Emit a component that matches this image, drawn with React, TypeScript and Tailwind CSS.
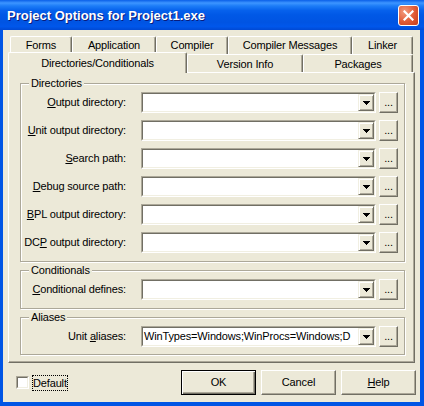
import React from 'react';
import clsx from 'clsx';

// Project Options dialog - XP caption with classic 3D controls inside
function Tab({ children, className, selected }: { children: React.ReactNode; className: string; selected?: boolean }) {
  return (
    <div
      className={clsx(
        'flex shrink-0 items-center justify-center whitespace-nowrap rounded-t-[2px] border-t border-l border-r border-t-white border-l-white border-r-[#716F64] bg-[#ECE9D8] shadow-[inset_-1px_0_0_#ACA899]',
        selected ? 'relative z-10 -mb-[1px] h-[21px]' : 'h-[18px]',
        className,
      )}
    >
      {children}
    </div>
  );
}

function DropButton() {
  return (
    <div className="flex h-full w-[16px] shrink-0 items-center justify-center border border-t-[#F1EFE2] border-l-[#F1EFE2] border-r-[#716F64] border-b-[#716F64] bg-[#ECE9D8] shadow-[inset_1px_1px_0_#fff,inset_-1px_-1px_0_#ACA899]">
      <svg width="7" height="4" viewBox="0 0 7 4" shapeRendering="crispEdges">
        <path d="M0 0h7v1h-1v1h-1v1h-1v1h-1v-1h-1v-1h-1v-1h-1z" fill="#000" />
      </svg>
    </div>
  );
}

function Combo({ value }: { value?: string }) {
  return (
    <div className="flex h-[21px] w-[235px] shrink-0 border border-t-[#ACA899] border-l-[#ACA899] border-r-white border-b-white">
      <div className="flex min-w-0 flex-1 border border-t-[#716F64] border-l-[#716F64] border-r-[#F1EFE2] border-b-[#F1EFE2] bg-white">
        <div className="flex min-w-0 flex-1 items-center overflow-hidden whitespace-nowrap pl-[1px]">{value}</div>
        <DropButton />
      </div>
    </div>
  );
}

function DotsButton() {
  return (
    <div className="ml-[3px] flex h-[21px] w-[19px] shrink-0 items-center justify-center border border-t-white border-l-white border-r-[#716F64] border-b-[#716F64] bg-[#ECE9D8] shadow-[inset_-1px_-1px_0_#ACA899]">
      ...
    </div>
  );
}

function Row({ label, value }: { label: React.ReactNode; value?: string }) {
  return (
    <div className="flex h-[21px] items-center">
      <div className="w-[105px] shrink-0 whitespace-nowrap text-right">{label}</div>
      <div className="ml-[15px]">
        <Combo value={value} />
      </div>
      <DotsButton />
    </div>
  );
}

function GroupBox({ title, children, className }: { title: string; children: React.ReactNode; className?: string }) {
  return (
    <fieldset className={clsx('ml-[11px] w-[385px] border border-[#ACA899] shadow-[inset_1px_1px_0_#fff,1px_1px_0_#fff]', className)}>
      <legend className="ml-[8px] bg-[#ECE9D8] px-[2px] leading-[13px]">{title}</legend>
      {children}
    </fieldset>
  );
}

function PushButton({ children, isDefault }: { children: React.ReactNode; isDefault?: boolean }) {
  return (
    <button
      type="button"
      className={clsx(
        'flex h-[25px] w-[75px] items-center justify-center bg-[#ECE9D8]',
        isDefault
          ? 'border border-black shadow-[inset_1px_1px_0_#fff,inset_-1px_-1px_0_#716F64,inset_-2px_-2px_0_#ACA899]'
          : 'border border-t-white border-l-white border-r-[#716F64] border-b-[#716F64] shadow-[inset_-1px_-1px_0_#ACA899]',
      )}
    >
      {children}
    </button>
  );
}

const U = ({ children }: { children: React.ReactNode }) => <span className="underline">{children}</span>;

export default function App() {
  return (
    <div className="flex h-[406px] w-[424px] flex-col bg-[#0055E5] font-['Liberation_Sans',Arial,sans-serif] text-[11px] leading-[13px] tracking-[-0.15px] text-black">
      {/* caption */}
      <div className="flex h-[30px] shrink-0 items-center justify-between bg-[linear-gradient(180deg,#0A5FE8_0%,#3D95FF_10%,#1C7CF7_20%,#0661EC_35%,#0058E6_50%,#0054E3_75%,#0057EB_88%,#0049D4_100%)] pl-[7px] pr-[5px]">
        <span className="text-[13px] font-bold tracking-normal text-white [text-shadow:1px_1px_0_#0A1B7A]">Project Options for Project1.exe</span>
        <div className="flex h-[21px] w-[21px] items-center justify-center rounded-[3px] border border-white bg-[radial-gradient(circle_at_30%_30%,#F39A7D,#E05A35_55%,#C43C1C)]">
          <svg width="11" height="11" viewBox="0 0 11 11">
            <path d="M1.5 1.5l8 8M9.5 1.5l-8 8" stroke="#fff" strokeWidth="2.2" strokeLinecap="square" />
          </svg>
        </div>
      </div>

      {/* frame */}
      <div className="flex flex-1 flex-col pl-[3px] pr-[4px] pb-[4px]">
        <div className="flex flex-1 flex-col bg-[#ECE9D8] pl-[5px] pr-[4px] pt-[6px]">
          {/* tabs */}
          <div className="flex h-[18px] pl-[2px]">
            <Tab className="w-[62px]">Forms</Tab>
            <Tab className="w-[84px]">Application</Tab>
            <Tab className="w-[72px]">Compiler</Tab>
            <Tab className="w-[124px]">Compiler Messages</Tab>
            <Tab className="w-[61px]">Linker</Tab>
          </div>
          <div className="flex h-[18px] items-end">
            <Tab className="w-[179px]" selected>Directories/Conditionals</Tab>
            <Tab className="w-[116px] pt-[1px]">Version Info</Tab>
            <Tab className="w-[110px] pt-[1px]">Packages</Tab>
          </div>

          {/* page */}
          <div className="flex h-[291px] w-[407px] flex-col border border-t-white border-l-white border-r-[#716F64] border-b-[#716F64] shadow-[inset_-1px_-1px_0_#ACA899]">
            <GroupBox title="Directories" className="mt-[4px]">
              <div className="flex flex-col gap-[7px] pt-[2px] pb-[8px]">
                <Row label={<><U>O</U>utput directory:</>} />
                <Row label={<><U>U</U>nit output directory:</>} />
                <Row label={<><U>S</U>earch path:</>} />
                <Row label={<><U>D</U>ebug source path:</>} />
                <Row label={<><U>B</U>PL output directory:</>} />
                <Row label={<>DC<U>P</U> output directory:</>} />
              </div>
            </GroupBox>
            <GroupBox title="Conditionals" className="mt-[2px]">
              <div className="pt-[2px] pb-[8px]">
                <Row label={<><U>C</U>onditional defines:</>} />
              </div>
            </GroupBox>
            <GroupBox title="Aliases" className="mt-[2px]">
              <div className="pt-[2px] pb-[7px]">
                <Row label={<>Unit <U>a</U>liases:</>} value="WinTypes=Windows;WinProcs=Windows;D" />
              </div>
            </GroupBox>
          </div>

          {/* bottom bar */}
          <div className="mt-[7px] flex h-[25px] items-center">
            <div className="ml-[8px] h-[13px] w-[13px] border border-t-[#ACA899] border-l-[#ACA899] border-r-white border-b-white">
              <div className="h-full w-full border border-t-[#716F64] border-l-[#716F64] border-r-[#F1EFE2] border-b-[#F1EFE2] bg-white" />
            </div>
            <div className="ml-[3px] border border-dotted border-black leading-[14px]">Default</div>
            <div className="ml-auto flex">
              <PushButton isDefault>OK</PushButton>
              <div className="ml-[5px]">
                <PushButton>Cancel</PushButton>
              </div>
              <div className="ml-[5px]">
                <PushButton><U>H</U>elp</PushButton>
              </div>
            </div>
          </div>
        </div>
      </div>
    </div>
  );
}
